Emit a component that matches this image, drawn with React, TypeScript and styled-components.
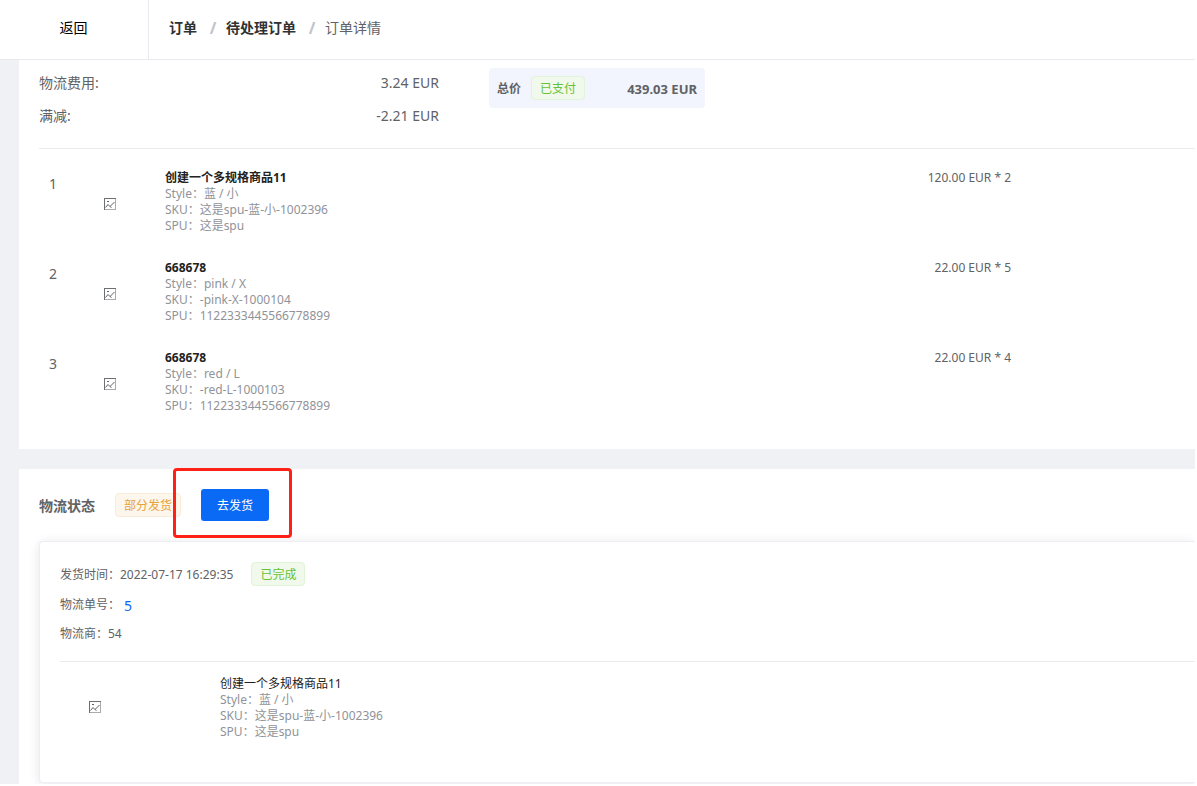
import React from 'react';
import styled, { createGlobalStyle } from 'styled-components';

const GlobalStyle = createGlobalStyle`
  *, *::before, *::after { box-sizing: border-box; }
  body {
    margin: 0;
    background: #fff;
    color: #606266;
    font-family: "Noto Sans", "Noto Sans CJK SC", sans-serif;
    font-size: 14px;
    line-height: 20px;
  }
  button { font-family: inherit; cursor: pointer; }
  a { color: inherit; text-decoration: none; }
`;

const Page = styled.div`
  padding: 0 2px 2px 0;
`;

const Header = styled.header`
  display: flex;
  height: 60px;
  border-bottom: 1px solid #e9eaf0;
`;

const BackButton = styled.button`
  width: 149px;
  padding: 0 1px 4px 0;
  border: 0;
  border-right: 1px solid #e9eaf0;
  background: #fff;
  color: #000;
  font-size: 14px;
  line-height: 20px;
`;

const Breadcrumb = styled.nav`
  display: flex;
  align-items: center;
  padding: 0 20px 4px;
`;

const Crumb = styled.a`
  color: #303133;
  font-weight: 700;
`;

const Current = styled.span`
  color: #606266;
`;

const Slash = styled.span`
  width: 29px;
  padding-left: 3px;
  color: #c0c4cc;
  font-size: 16px;
  font-weight: 700;
  text-align: center;
`;

const Main = styled.main`
  display: flex;
  flex-direction: column;
  gap: 20px;
  padding-left: 19px;
  background: #f0f1f5;
  overflow: hidden;
`;

const Card = styled.section<{ $flush?: boolean }>`
  padding: ${(p) => (p.$flush ? '20px 0 1px 20px' : '8px 0 9px 20px')};
  background: #fff;
`;

const Summary = styled.div`
  display: flex;
  align-items: flex-start;
  gap: 50px;
  padding-bottom: 16px;
  border-bottom: 1px solid #ebebeb;
`;

const Fees = styled.dl`
  display: grid;
  grid-template-columns: 1fr auto;
  row-gap: 13px;
  width: 400px;
  margin: 0;
  padding: 5px 0 6px;
`;

const FeeLabel = styled.dt``;

const FeeValue = styled.dd`
  margin: 0;
  text-align: right;
`;

const Total = styled.div`
  display: flex;
  align-items: center;
  width: 216px;
  height: 40px;
  padding: 0 8px;
  border-radius: 4px;
  background: #f2f5fd;
  font-size: 12px;
  font-weight: 700;
`;

const Text = styled.span`
  padding-top: 2px;
`;

const Amount = styled(Text)`
  margin-left: auto;
  font-size: 13px;
`;

const tones = {
  success: { color: '#67c23a', background: '#f0f9eb', border: '#e1f3d8' },
  warning: { color: '#e6a23c', background: '#fdf6ec', border: '#faecd8' },
};

const Tag = styled.span<{ $tone: keyof typeof tones; $gap: number }>`
  height: 24px;
  margin-left: ${(p) => p.$gap}px;
  padding: 0 8px;
  border: 1px solid ${(p) => tones[p.$tone].border};
  border-radius: 4px;
  background: ${(p) => tones[p.$tone].background};
  color: ${(p) => tones[p.$tone].color};
  font-size: 12px;
  font-weight: 400;
  line-height: 24px;
`;

const Items = styled.table`
  width: 100%;
  margin-top: 21px;
  border-collapse: collapse;
  table-layout: fixed;
`;

const Row = styled.tr`
  height: 90px;
`;

const Cell = styled.td<{ $width?: number }>`
  width: ${(p) => (p.$width ? `${p.$width}px` : 'auto')};
  padding: 0;
  vertical-align: top;
`;

const IndexCell = styled(Cell)`
  padding: 4px 0 0 10px;
`;

const ImageCell = styled(Cell)`
  padding-top: 28px;
`;

const PriceCell = styled(Cell)`
  padding-right: 184px;
  font-size: 12px;
  line-height: 16px;
  text-align: right;
`;

const Info = styled.div`
  color: #909399;
  font-size: 12px;
  line-height: 16px;
`;

const Name = styled.div<{ $bold?: boolean }>`
  color: #222;
  font-weight: ${(p) => (p.$bold ? 700 : 400)};
`;

const StatusBar = styled.div`
  display: flex;
  align-items: center;
  height: 32px;
  margin-bottom: 20px;
`;

const Title = styled.h2`
  margin: 0;
  padding-top: 2px;
  font-size: 14px;
  line-height: 20px;
`;

const Action = styled.span`
  position: relative;
  margin-left: 20px;
`;

const ShipButton = styled.button`
  display: block;
  width: 68px;
  height: 32px;
  padding: 0;
  border: 0;
  border-radius: 3px;
  background: #0a69f5;
  color: #fff;
  font-size: 12px;
`;

const Highlight = styled.span`
  position: absolute;
  inset: -21px -23px -17px -28px;
  border: 3px solid #ff2116;
  border-radius: 4px;
  pointer-events: none;
`;

const Parcel = styled.article`
  height: 242px;
  padding: 20px 0 0 20px;
  border: 1px solid #ebeef5;
  border-right: 0;
  border-radius: 4px 0 0 4px;
  background: #fff;
  box-shadow: 0 2px 12px rgba(0, 0, 0, 0.1);
`;

const ParcelLine = styled.div<{ $height: number }>`
  display: flex;
  align-items: center;
  height: ${(p) => p.$height}px;
  font-size: 12px;
`;

const Tracking = styled.a`
  margin-left: 4px;
  padding-top: 3px;
  color: #0a69f5;
  font-size: 14px;
`;

const ParcelItem = styled.div`
  display: flex;
  margin-top: 15px;
  padding-top: 14px;
  border-top: 1px solid #ebebeb;
`;

const Thumb = styled.div`
  width: 160px;
  padding: 25px 0 0 29px;
`;

const Picture = styled.svg`
  display: block;
  width: 12px;
  height: 12px;
`;

const MissingImage = () => (
  <Picture viewBox="0 0 12 12" fill="none" aria-hidden="true">
    <rect x="0.5" y="0.5" width="11" height="11" stroke="#6c6f73" fill="#fff" />
    <path d="M1 11.5h11M11.5 1v11" stroke="#a9abad" />
    <rect x="3" y="3" width="2" height="1" fill="#606266" />
    <path d="M1.5 9.5L4 6.5L6 8.5L10.5 4M6 8.5L7.5 9.5" stroke="#606266" />
  </Picture>
);

interface Product {
  name: string;
  style: string;
  sku: string;
  spu: string;
  price: string;
}

const products: Product[] = [
  { name: '创建一个多规格商品11', style: '蓝 / 小', sku: '这是spu-蓝-小-1002396', spu: '这是spu', price: '120.00 EUR * 2' },
  { name: '668678', style: 'pink / X', sku: '-pink-X-1000104', spu: '1122333445566778899', price: '22.00 EUR * 5' },
  { name: '668678', style: 'red / L', sku: '-red-L-1000103', spu: '1122333445566778899', price: '22.00 EUR * 4' },
];

const ProductInfo = ({ product, bold }: { product: Product; bold?: boolean }) => (
  <Info>
    <Name $bold={bold}>{product.name}</Name>
    <div>Style：{product.style}</div>
    <div>SKU：{product.sku}</div>
    <div>SPU：{product.spu}</div>
  </Info>
);

export default function App() {
  return (
    <Page>
      <GlobalStyle />
      <Header>
        <BackButton type="button">返回</BackButton>
        <Breadcrumb>
          <Crumb href="#orders">订单</Crumb>
          <Slash>/</Slash>
          <Crumb href="#pending">待处理订单</Crumb>
          <Slash>/</Slash>
          <Current>订单详情</Current>
        </Breadcrumb>
      </Header>
      <Main>
        <Card>
          <Summary>
            <Fees>
              <FeeLabel>物流费用:</FeeLabel>
              <FeeValue>3.24 EUR</FeeValue>
              <FeeLabel>满减:</FeeLabel>
              <FeeValue>-2.21 EUR</FeeValue>
            </Fees>
            <Total>
              <Text>总价</Text>
              <Tag $tone="success" $gap={10}>已支付</Tag>
              <Amount>439.03 EUR</Amount>
            </Total>
          </Summary>
          <Items>
            <tbody>
              {products.map((product, i) => (
                <Row key={product.sku}>
                  <IndexCell $width={65}>{i + 1}</IndexCell>
                  <ImageCell $width={61}>
                    <MissingImage />
                  </ImageCell>
                  <Cell>
                    <ProductInfo product={product} bold />
                  </Cell>
                  <PriceCell>{product.price}</PriceCell>
                </Row>
              ))}
            </tbody>
          </Items>
        </Card>
        <Card $flush>
          <StatusBar>
            <Title>物流状态</Title>
            <Tag $tone="warning" $gap={20}>部分发货</Tag>
            <Action>
              <ShipButton type="button">去发货</ShipButton>
              <Highlight />
            </Action>
          </StatusBar>
          <Parcel>
            <ParcelLine $height={24}>
              <Text>发货时间：2022-07-17 16:29:35</Text>
              <Tag $tone="success" $gap={18}>已完成</Tag>
            </ParcelLine>
            <ParcelLine $height={36}>
              <Text>物流单号：</Text>
              <Tracking href="#tracking">5</Tracking>
            </ParcelLine>
            <ParcelLine $height={24}>物流商：54</ParcelLine>
            <ParcelItem>
              <Thumb>
                <MissingImage />
              </Thumb>
              <ProductInfo product={products[0]} />
            </ParcelItem>
          </Parcel>
        </Card>
      </Main>
    </Page>
  );
}
